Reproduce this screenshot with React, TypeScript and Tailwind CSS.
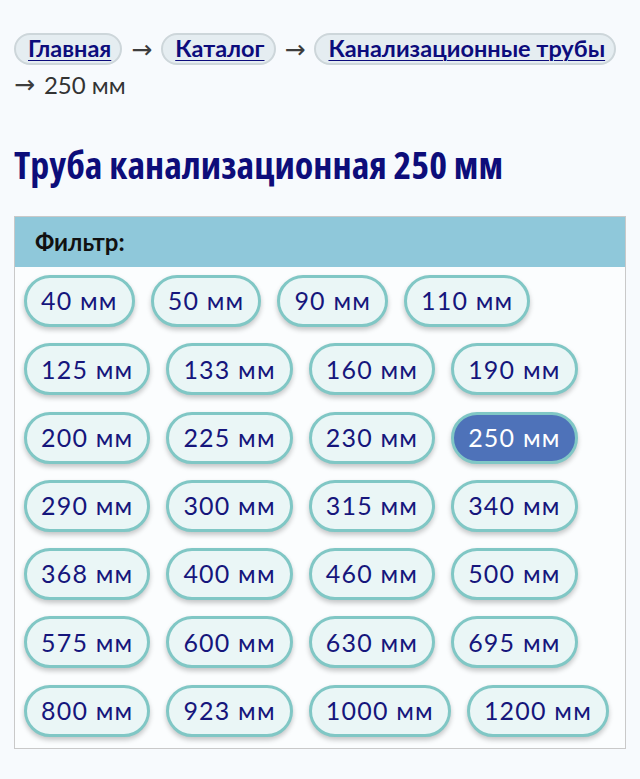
const SIZES = [
  40, 50, 90, 110, 125, 133, 160, 190, 200, 225, 230, 250, 290, 300, 315, 340,
  368, 400, 460, 500, 575, 600, 630, 695, 800, 923, 1000, 1200,
]

const CURRENT = 250

const NARROW = "font-['Open_Sans','Roboto',sans-serif] [font-stretch:75%]"
const BODY = "font-['Lato','Open_Sans',sans-serif]"

function Arrow() {
  return <span className="font-['DejaVu_Sans',sans-serif] text-[25px] font-normal leading-none text-[#3d3d3d]">→</span>
}

function Crumb({ label }: { label: string }) {
  return (
    <a
      href="#"
      className="inline-flex h-[32px] items-center rounded-full border-2 border-[#cdd6da] bg-[#e5edf1] pl-[12px] pr-[9px] font-bold text-[#0c0c7c] underline decoration-1 underline-offset-[3px]"
    >
      {label}
    </a>
  )
}

export default function App() {
  return (
    <div className="min-h-screen bg-[#f7fafd] px-[14px] pt-[33px]">
      {/* breadcrumbs */}
      <nav className={`${BODY} flex flex-wrap items-center gap-x-[9px] gap-y-[7px] text-[23.5px] leading-none text-[#333]`}>
        <Crumb label="Главная" />
        <Arrow />
        <Crumb label="Каталог" />
        <Arrow />
        <Crumb label="Канализационные трубы" />
        <span className="flex basis-full items-center gap-[9px] text-[24px]">
          <Arrow />
          <span>250 мм</span>
        </span>
      </nav>

      <h1 className={`${NARROW} mt-[48px] text-[38px] font-bold leading-none text-[#0d0d7a]`}>
        Труба канализационная 250 мм
      </h1>

      {/* size filter */}
      <div className="mt-[33px] border border-[#c9c9c9] bg-[#fbfdfe]">
        <div className={`${BODY} flex h-[50px] items-center bg-[#8fc8da] px-5 text-[24px] font-bold text-[#111]`}>
          Фильтр:
        </div>
        <div className="flex flex-wrap gap-x-[16px] gap-y-[16.3px] px-[9px] pb-[11px] pt-[8px]">
          {SIZES.map((s) => {
            const active = s === CURRENT
            return (
              <a
                key={s}
                href="#"
                className={`${BODY} flex h-[52px] items-center rounded-full border-[3px] border-[#80c7c5] px-[14px] text-[25px] tracking-[1.2px] shadow-[0_3px_5px_rgba(0,0,0,0.22)] ${
                  active ? 'bg-[#4e72b9] text-white' : 'bg-[#eaf6f6] text-[#16167c]'
                }`}
              >
                {s} мм
              </a>
            )
          })}
        </div>
      </div>
    </div>
  )
}
